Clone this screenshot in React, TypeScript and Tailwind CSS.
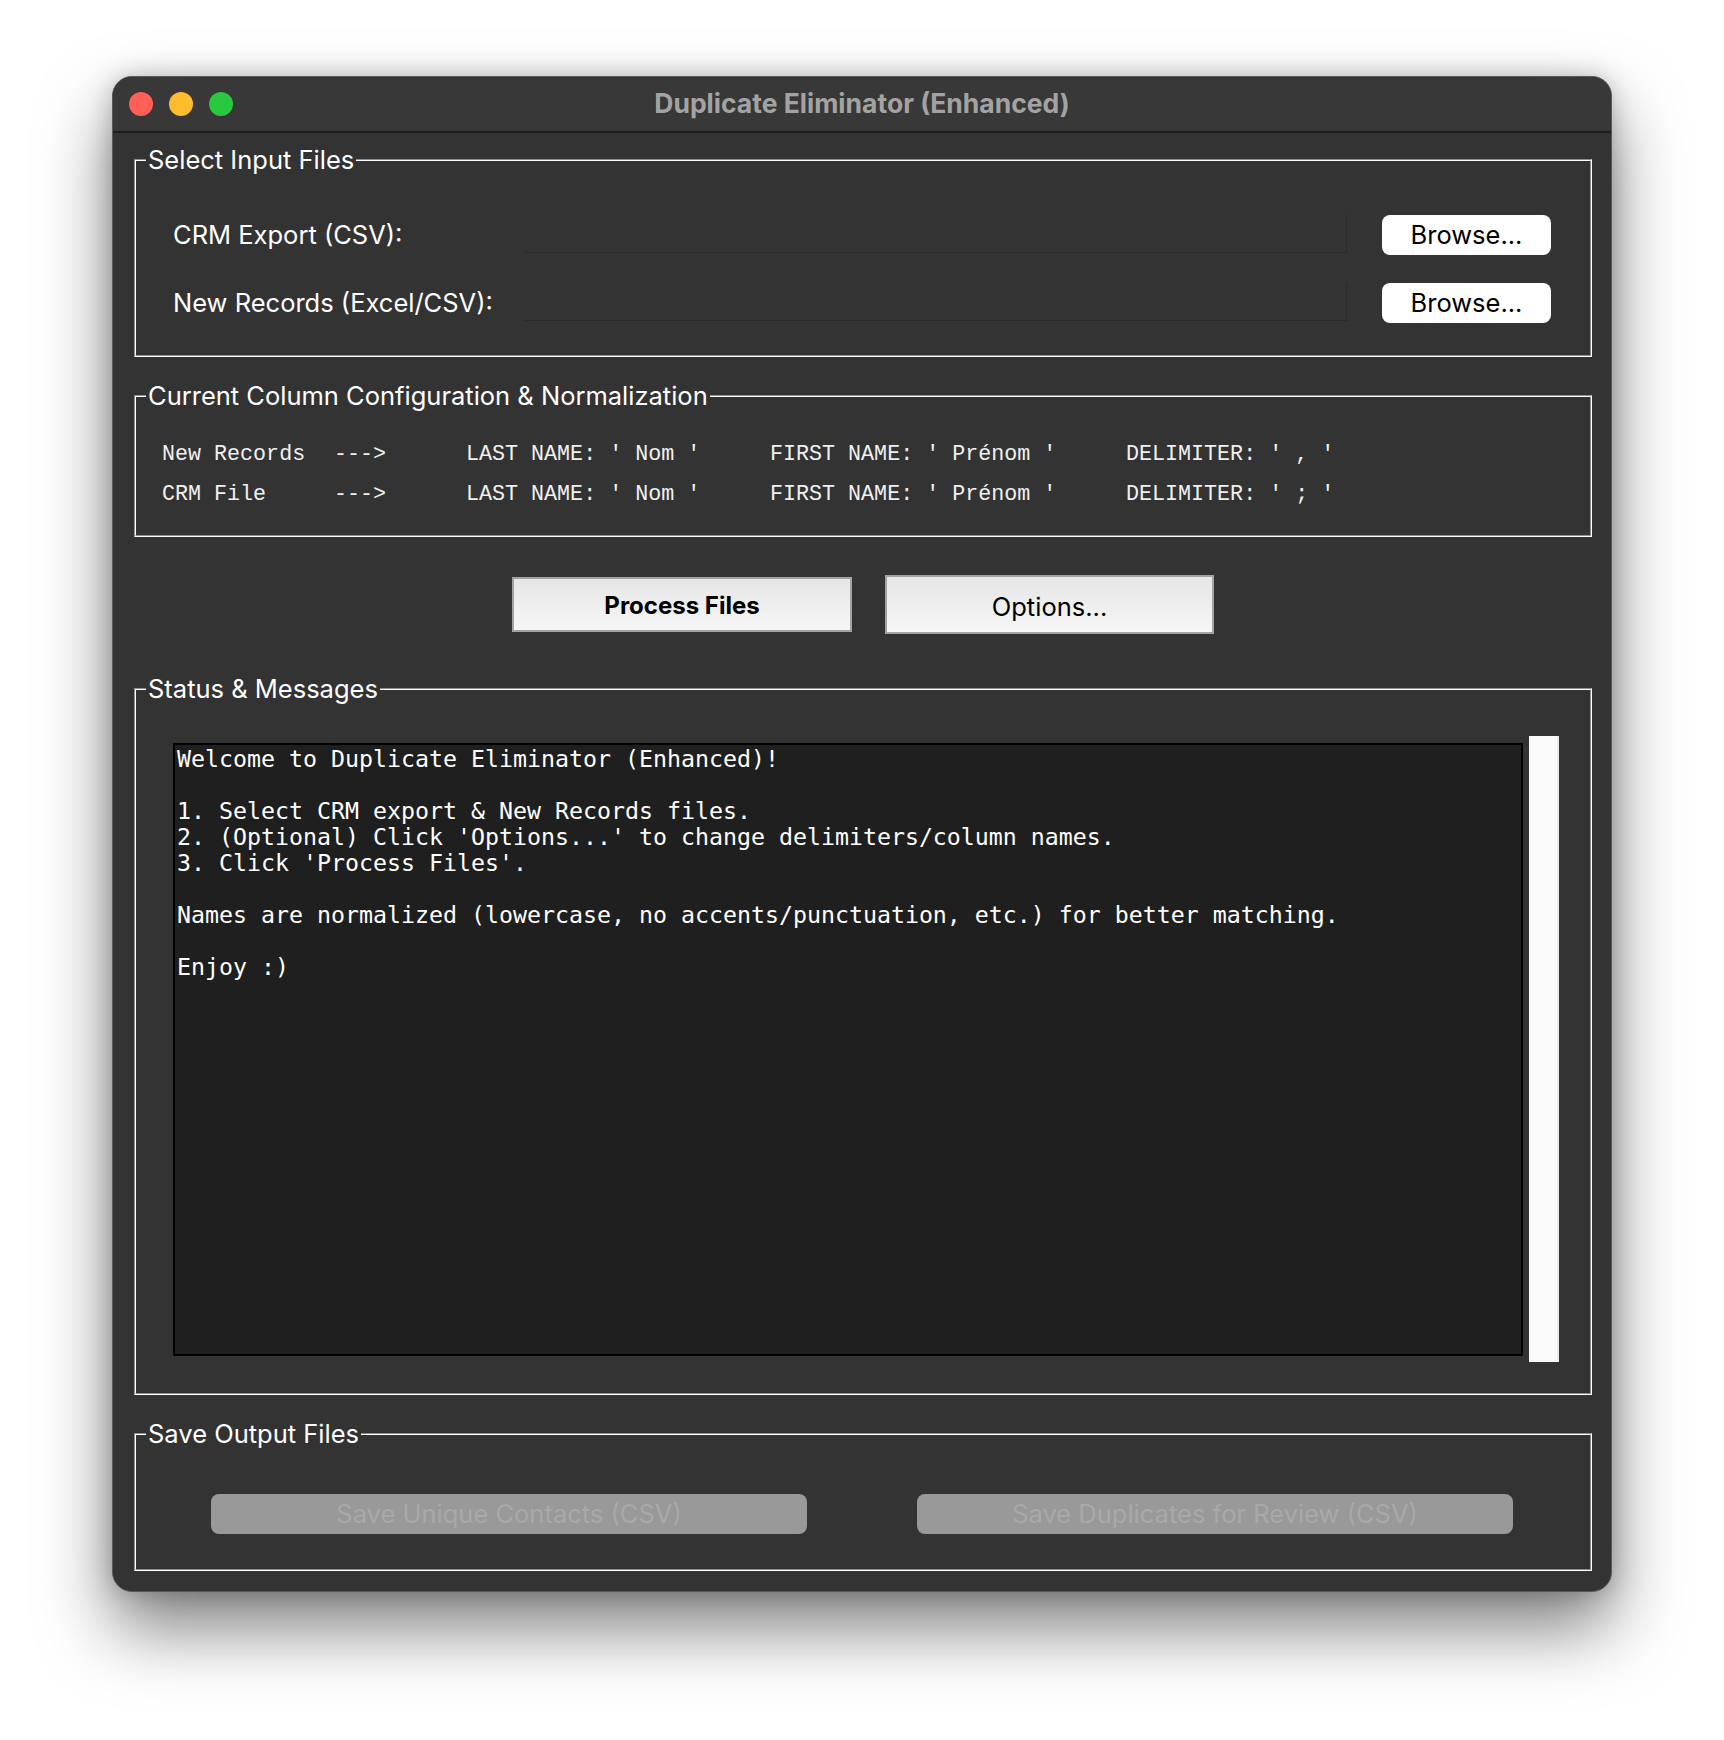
import React from 'react'

const sans = "font-['Inter','Noto_Sans',sans-serif]"

function Group({
  title,
  className,
  children,
}: {
  title: string
  className?: string
  children: React.ReactNode
}) {
  return (
    <div
      className={
        'relative border border-t-[#8e8e8e] border-l-[#8e8e8e] border-b-white border-r-white ' +
        (className ?? '')
      }
    >
      <div className="h-full border border-t-white border-l-white border-b-[#8e8e8e] border-r-[#8e8e8e]">
        {children}
      </div>
      <span
        className={
          sans +
          ' absolute left-[11px] top-0 -translate-y-1/2 bg-[#333333] px-[2px] text-[25.5px] leading-[30px] text-white'
        }
      >
        {title}
      </span>
    </div>
  )
}

function FileRow({ label }: { label: string }) {
  return (
    <div className="flex h-[40px] items-center">
      <div className={sans + ' w-[352px] text-[25.5px] text-white'}>{label}</div>
      <div className="mt-[-2px] h-[38px] w-[822px] border-b border-r border-[#2a2a2a] bg-[#333333]" />
      <button
        className={
          sans +
          ' ml-[35px] h-[40px] w-[169px] rounded-[8px] bg-white text-[25.5px] text-black'
        }
      >
        Browse...
      </button>
    </div>
  )
}

const configRows = [
  ['New Records', '--->', "LAST NAME: ' Nom '", "FIRST NAME: ' Prénom '", "DELIMITER: ' , '"],
  ['CRM File', '--->', "LAST NAME: ' Nom '", "FIRST NAME: ' Prénom '", "DELIMITER: ' ; '"],
]

const welcome = `Welcome to Duplicate Eliminator (Enhanced)!

1. Select CRM export & New Records files.
2. (Optional) Click 'Options...' to change delimiters/column names.
3. Click 'Process Files'.

Names are normalized (lowercase, no accents/punctuation, etc.) for better matching.

Enjoy :)`

export default function App() {
  return (
    <div className="min-h-screen bg-white pl-[112px] pt-[76px]">
      <div className="flex h-[1516px] w-[1500px] flex-col overflow-hidden rounded-[20px] border border-[#5a5a5a] bg-[#333333] shadow-[0_36px_70px_rgba(0,0,0,0.5),0_0_24px_rgba(0,0,0,0.22)]">
        {/* title bar */}
        <div className="relative flex h-[56px] shrink-0 items-center border-b-2 border-[#1c1c1c] bg-[#383838]">
          <div className="ml-[16px] flex gap-[16px]">
            <span className="h-[24px] w-[24px] rounded-full bg-[#fe5f57]" />
            <span className="h-[24px] w-[24px] rounded-full bg-[#febc2e]" />
            <span className="h-[24px] w-[24px] rounded-full bg-[#28c840]" />
          </div>
          <div
            className={
              sans +
              ' absolute inset-x-0 text-center text-[26.5px] font-bold text-[#a3a3a3]'
            }
          >
            Duplicate Eliminator (Enhanced)
          </div>
        </div>

        <div className="flex flex-col pl-[21px] pr-[19px] pt-[26px]">
          <Group title="Select Input Files" className="h-[198px]">
            <div className="flex flex-col gap-[28px] pl-[37px] pt-[54px]">
              <FileRow label="CRM Export (CSV):" />
              <FileRow label="New Records (Excel/CSV):" />
            </div>
          </Group>

          <Group title="Current Column Configuration & Normalization" className="mt-[38px] h-[142px]">
            <div className="flex flex-col pl-[26px] pt-[38px] font-['Courier_New','Nimbus_Mono_PS','FreeMono','Liberation_Mono',monospace] text-[21.7px] leading-[40px] text-[#f0f0f0]">
              {configRows.map((row) => (
                <div
                  key={row[0]}
                  className="grid grid-cols-[172px_132px_304px_356px_auto] whitespace-pre"
                >
                  {row.map((c, i) => (
                    <span key={i}>{c}</span>
                  ))}
                </div>
              ))}
            </div>
          </Group>

          <div className="flex h-[151px] items-center justify-center gap-[33px] pb-[16px]">
            <button
              className={
                sans +
                ' h-[55px] w-[340px] border-2 border-[#a3a3a3] bg-gradient-to-b from-[#e6e6e6] to-[#f6f6f6] pt-[2px] text-[24px] font-bold text-black'
              }
            >
              Process Files
            </button>
            <button
              className={
                sans +
                ' h-[59px] w-[329px] border-2 border-[#a3a3a3] bg-gradient-to-b from-[#e6e6e6] to-[#f6f6f6] pt-[5px] text-[25.5px] text-black'
              }
            >
              Options...
            </button>
          </div>

          <Group title="Status & Messages" className="h-[707px]">
            <div className="mt-[46px] flex h-[626px] items-center pl-[37px]">
              <pre className="h-[613px] w-[1350px] overflow-hidden border-2 border-black bg-[#1f1f1f] pl-[2px] pt-[1px] font-['DejaVu_Sans_Mono',monospace] text-[23.25px] leading-[26px] text-white">
                {welcome}
              </pre>
              <div className="ml-[6px] h-[626px] w-[30px] border-r-2 border-[#ececec] bg-[#fafafa]" />
            </div>
          </Group>

          <Group title="Save Output Files" className="mt-[38px] h-[138px]">
            <div className="flex justify-center gap-[110px] pt-[59px] pr-[2px]">
              <button
                className={
                  sans +
                  ' h-[40px] w-[596px] rounded-[8px] bg-[#999999] text-[25.5px] text-[#a9a9a9]'
                }
              >
                Save Unique Contacts (CSV)
              </button>
              <button
                className={
                  sans +
                  ' h-[40px] w-[596px] rounded-[8px] bg-[#999999] text-[25.5px] text-[#a9a9a9]'
                }
              >
                Save Duplicates for Review (CSV)
              </button>
            </div>
          </Group>
        </div>
      </div>
    </div>
  )
}
